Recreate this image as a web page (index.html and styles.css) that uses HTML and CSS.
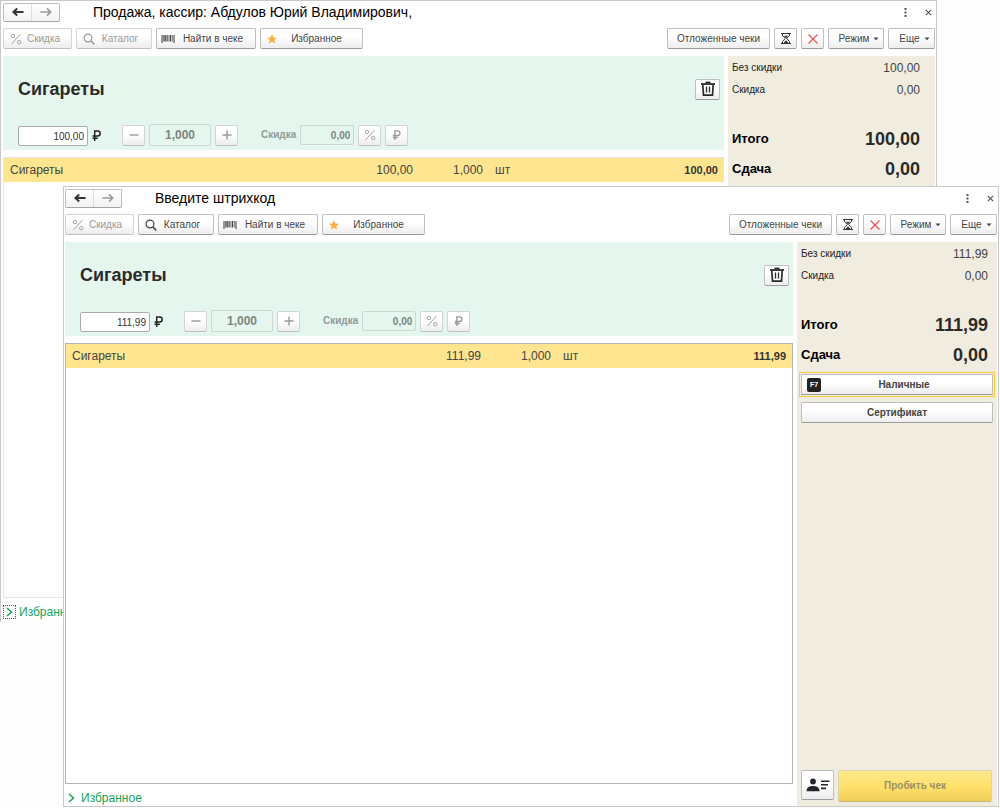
FILE: index.html
```html
<!DOCTYPE html>
<html lang="ru">
<head>
<meta charset="utf-8">
<title>Рабочее место кассира</title>
<link rel="stylesheet" href="styles.css">
</head>
<body>
<svg class="sprite" aria-hidden="true">
  <symbol id="i-back" viewBox="0 0 12 10"><path d="M11.5 5H2M5.2 1.4L1.4 5l3.800 3.600" fill="none" stroke="currentColor" stroke-width="2"/></symbol>
  <symbol id="i-fwd" viewBox="0 0 12 10"><path d="M.5 5H10M7 1.400L10.700 5 7 8.600" fill="none" stroke="currentColor" stroke-width="1.600"/></symbol>
  <symbol id="i-percent" viewBox="0 0 12 12"><g fill="none" stroke="currentColor" stroke-width=".9"><circle cx="2.900" cy="3" r="1.700"/><circle cx="9.200" cy="9.200" r="1.700"/><path d="M10.500 1L1.500 11"/></g></symbol>
  <symbol id="i-search" viewBox="0 0 12 12"><g fill="none" stroke="currentColor" stroke-width="1.200"><circle cx="5" cy="5" r="3.900"/><path d="M7.800 7.800L11.200 11.400" stroke-width="1.600"/></g></symbol>
  <symbol id="i-barcode" viewBox="0 0 14 9"><path d="M1 1V9M13 1V9" stroke="#333" stroke-width="1"/><path d="M3 1V7.500M4.800 1V7.500M9.500 1V7.500" stroke="#444" stroke-width="1.300"/><path d="M6.500 1V7.500M7.900 1V7.500M11.300 1V7.500" stroke="#666" stroke-width=".9"/></symbol>
  <symbol id="i-star" viewBox="0 0 10 10"><path d="M5 .2l1.400 3.200 3.500.300-2.600 2.300.8 3.500L5 7.700 1.900 9.500l.8-3.500L.1 3.700l3.500-.300z" fill="#fbac3c"/></symbol>
  <symbol id="i-glass" viewBox="0 0 12 13"><path d="M1 1.500H11M1 11.500H11" stroke="#333" stroke-width="1.200"/><path d="M2.500 1.500V3.500L5.300 6.500 2.500 9.500V11.500M9.500 1.500V3.500L6.700 6.500 9.500 9.500V11.500" fill="none" stroke="#333" stroke-width="1"/><path d="M3.800 3.800H8.200L6 6.200zM6 8.200L8.500 11H3.500z" fill="#333"/></symbol>
  <symbol id="i-cross" viewBox="0 0 12 12"><path d="M1.500 1.500L10.500 10.500M10.500 1.500L1.500 10.500" stroke="#ee4a4a" stroke-width="1.100"/></symbol>
  <symbol id="i-trash" viewBox="0 0 16 16"><g fill="none" stroke="#2a2a2a"><path d="M1 3H15" stroke-width="1.800"/><path d="M5.500 1.400H10.500" stroke-width="1.600"/><path d="M2.800 4L3.500 14.200H12.500L13.200 4" stroke-width="1.700"/><path d="M6.500 5.500V11.500M9.500 5.500V11.500" stroke-width="1.300"/></g></symbol>
  <symbol id="i-rub" viewBox="0 0 10 12"><path d="M3 12V1H6.300a2.600 2.600 0 0 1 0 5.600H.6M.6 9H6.500" fill="none" stroke="currentColor" stroke-width="1.600"/></symbol>
  <symbol id="i-minus" viewBox="0 0 12 12"><path d="M1.500 6H10.500" stroke="currentColor" stroke-width="1.400"/></symbol>
  <symbol id="i-plus" viewBox="0 0 12 12"><path d="M1.500 6H10.500M6 1.500V10.500" stroke="currentColor" stroke-width="1.400"/></symbol>
  <symbol id="i-caret" viewBox="0 0 6 4"><path d="M.5.500H5.500L3 3.300z" fill="#444"/></symbol>
  <symbol id="i-dots" viewBox="0 0 3 9"><path d="M.5 0h2v2h-2zM.5 3.500h2v2h-2zM.5 7h2v2h-2z" fill="#555"/></symbol>
  <symbol id="i-close" viewBox="0 0 7 7"><path d="M.8.800L6.200 6.200M6.200.800L.8 6.200" stroke="#555" stroke-width="1.100"/></symbol>
  <symbol id="i-chevron" viewBox="0 0 7 10"><path d="M1 1L5.500 5 1 9" fill="none" stroke="#16a35a" stroke-width="1.500"/></symbol>
  <symbol id="i-card" viewBox="0 0 24 14"><g fill="#262626"><circle cx="7" cy="3.500" r="2.900"/><path d="M.5 13.200C.5 9 4 8 7 8s6.500 1 6.500 5.200z"/><path d="M15 2.400h8.500v1.600H15zM15 6h7v1.600h-7zM15 9.600h5v1.600h-5z"/></g></symbol>
</svg>

<main class="desktop">
  <section class="window window-back">
    <header class="titlebar">
      <div class="nav">
        <button class="nav-btn" aria-label="Назад"><svg class="ic-arrow"><use href="#i-back"/></svg></button>
        <button class="nav-btn nav-off" aria-label="Вперед"><svg class="ic-arrow"><use href="#i-fwd"/></svg></button>
      </div>
      <h1 class="title">Продажа, кассир: Абдулов Юрий Владимирович,</h1>
      <button class="plain" aria-label="Меню"><svg class="ic-dots"><use href="#i-dots"/></svg></button>
      <button class="plain" aria-label="Закрыть"><svg class="ic-close"><use href="#i-close"/></svg></button>
    </header>
    <div class="toolbar">
      <button class="btn w-discount" disabled><svg class="ic"><use href="#i-percent"/></svg><span class="cap">Скидка</span></button>
      <button class="btn w-catalog" disabled><svg class="ic"><use href="#i-search"/></svg><span class="cap">Каталог</span></button>
      <button class="btn w-find"><svg class="ic-bar"><use href="#i-barcode"/></svg><span class="cap">Найти в чеке</span></button>
      <button class="btn w-wide"><svg class="ic-star"><use href="#i-star"/></svg><span class="cap">Избранное</span></button>
      <span class="spacer"></span>
      <button class="btn w-wide"><span class="cap">Отложенные чеки</span></button>
      <button class="btn square" aria-label="Отложить"><svg class="ic-glass"><use href="#i-glass"/></svg></button>
      <button class="btn square" aria-label="Отменить"><svg class="ic"><use href="#i-cross"/></svg></button>
      <button class="btn w-mode"><span class="cap">Режим</span><svg class="ic-caret"><use href="#i-caret"/></svg></button>
      <button class="btn w-more"><span class="cap">Еще</span><svg class="ic-caret"><use href="#i-caret"/></svg></button>
    </div>
    <div class="body">
      <div class="work">
        <div class="item">
          <div class="item-head">
            <h2 class="item-name">Сигареты</h2>
            <button class="btn trash" aria-label="Удалить"><svg class="ic-trash"><use href="#i-trash"/></svg></button>
          </div>
          <div class="item-row">
            <input class="field price" value="100,00" aria-label="Цена">
            <svg class="ic-rub"><use href="#i-rub"/></svg>
            <button class="btn square minus" disabled aria-label="Меньше"><svg class="ic"><use href="#i-minus"/></svg></button>
            <input class="field qty" value="1,000" disabled aria-label="Количество">
            <button class="btn square" disabled aria-label="Больше"><svg class="ic"><use href="#i-plus"/></svg></button>
            <label class="disc-label" for="disc-a">Скидка</label>
            <input class="field disc" id="disc-a" value="0,00" disabled>
            <button class="btn square" disabled aria-label="Процент"><svg class="ic"><use href="#i-percent"/></svg></button>
            <button class="btn square" disabled aria-label="Рубли"><svg class="ic-rub-sm"><use href="#i-rub"/></svg></button>
          </div>
        </div>
        <div class="list">
          <table class="goods">
            <tr><td>Сигареты</td><td class="c-price">100,00</td><td class="c-qty">1,000</td><td class="c-unit">шт</td><td class="c-sum">100,00</td></tr>
          </table>
        </div>
        <div class="fav"><button class="fav-toggle fav-focus" aria-label="Развернуть"><svg class="ic-chev"><use href="#i-chevron"/></svg></button><a class="fav-link" href="#">Избранное</a></div>
      </div>
      <aside class="side">
        <dl class="sums">
          <div class="sum"><dt>Без скидки</dt><dd>100,00</dd></div>
          <div class="sum"><dt>Скидка</dt><dd>0,00</dd></div>
        </dl>
        <dl class="sums totals">
          <div class="sum"><dt>Итого</dt><dd>100,00</dd></div>
          <div class="sum"><dt>Сдача</dt><dd>0,00</dd></div>
        </dl>
      </aside>
    </div>
  </section>

  <section class="window window-front">
    <header class="titlebar">
      <div class="nav">
        <button class="nav-btn" aria-label="Назад"><svg class="ic-arrow"><use href="#i-back"/></svg></button>
        <button class="nav-btn nav-off" aria-label="Вперед"><svg class="ic-arrow"><use href="#i-fwd"/></svg></button>
      </div>
      <h1 class="title">Введите штрихкод</h1>
      <button class="plain" aria-label="Меню"><svg class="ic-dots"><use href="#i-dots"/></svg></button>
      <button class="plain" aria-label="Закрыть"><svg class="ic-close"><use href="#i-close"/></svg></button>
    </header>
    <div class="toolbar">
      <button class="btn w-discount" disabled><svg class="ic"><use href="#i-percent"/></svg><span class="cap">Скидка</span></button>
      <button class="btn w-catalog"><svg class="ic"><use href="#i-search"/></svg><span class="cap">Каталог</span></button>
      <button class="btn w-find"><svg class="ic-bar"><use href="#i-barcode"/></svg><span class="cap">Найти в чеке</span></button>
      <button class="btn w-wide"><svg class="ic-star"><use href="#i-star"/></svg><span class="cap">Избранное</span></button>
      <span class="spacer"></span>
      <button class="btn w-wide"><span class="cap">Отложенные чеки</span></button>
      <button class="btn square" aria-label="Отложить"><svg class="ic-glass"><use href="#i-glass"/></svg></button>
      <button class="btn square" aria-label="Отменить"><svg class="ic"><use href="#i-cross"/></svg></button>
      <button class="btn w-mode"><span class="cap">Режим</span><svg class="ic-caret"><use href="#i-caret"/></svg></button>
      <button class="btn w-more"><span class="cap">Еще</span><svg class="ic-caret"><use href="#i-caret"/></svg></button>
    </div>
    <div class="body">
      <div class="work">
        <div class="item">
          <div class="item-head">
            <h2 class="item-name">Сигареты</h2>
            <button class="btn trash" aria-label="Удалить"><svg class="ic-trash"><use href="#i-trash"/></svg></button>
          </div>
          <div class="item-row">
            <input class="field price" value="111,99" aria-label="Цена">
            <svg class="ic-rub"><use href="#i-rub"/></svg>
            <button class="btn square minus" disabled aria-label="Меньше"><svg class="ic"><use href="#i-minus"/></svg></button>
            <input class="field qty" value="1,000" disabled aria-label="Количество">
            <button class="btn square" disabled aria-label="Больше"><svg class="ic"><use href="#i-plus"/></svg></button>
            <label class="disc-label" for="disc-b">Скидка</label>
            <input class="field disc" id="disc-b" value="0,00" disabled>
            <button class="btn square" disabled aria-label="Процент"><svg class="ic"><use href="#i-percent"/></svg></button>
            <button class="btn square" disabled aria-label="Рубли"><svg class="ic-rub-sm"><use href="#i-rub"/></svg></button>
          </div>
        </div>
        <div class="list">
          <table class="goods">
            <tr><td>Сигареты</td><td class="c-price">111,99</td><td class="c-qty">1,000</td><td class="c-unit">шт</td><td class="c-sum">111,99</td></tr>
          </table>
        </div>
        <div class="fav"><button class="fav-toggle" aria-label="Развернуть"><svg class="ic-chev"><use href="#i-chevron"/></svg></button><a class="fav-link" href="#">Избранное</a></div>
      </div>
      <aside class="side">
        <dl class="sums">
          <div class="sum"><dt>Без скидки</dt><dd>111,99</dd></div>
          <div class="sum"><dt>Скидка</dt><dd>0,00</dd></div>
        </dl>
        <dl class="sums totals">
          <div class="sum"><dt>Итого</dt><dd>111,99</dd></div>
          <div class="sum"><dt>Сдача</dt><dd>0,00</dd></div>
        </dl>
        <div class="pay">
          <button class="btn pay-btn pay-focus"><span class="key">F7</span><span class="cap">Наличные</span></button>
          <button class="btn pay-btn"><span class="cap">Сертификат</span></button>
        </div>
        <div class="finish">
          <button class="btn client" aria-label="Клиент"><svg class="ic-card"><use href="#i-card"/></svg></button>
          <button class="btn punch" disabled>Пробить чек</button>
        </div>
      </aside>
    </div>
  </section>
</main>
</body>
</html>
```

FILE: styles.css
```css
* { box-sizing: border-box; }

body {
  margin: 0;
  background: #fdfdfd;
  color: #333;
  font: 10px/14px "Liberation Sans", Arial, sans-serif;
}

h1, h2, dl, dt, dd { margin: 0; }
button, input { font: inherit; color: inherit; }
svg { display: block; flex: none; }
.sprite { position: absolute; width: 0; height: 0; }

/* Desktop with two overlapping windows */
.desktop { position: relative; height: 100vh; min-height: 600px; overflow: hidden; }

.window {
  position: absolute;
  display: flex;
  flex-direction: column;
  background: #fff;
  border: 1px solid #c9c9c9;
}
.window-back {
  --side: 207px; --sum-pad: 15px; --list-line: #e6e6e6;
  inset: 0 63px 186px 0;
  padding: 1px 1px 0 2px;
  border-bottom: 0;
}
.window-front {
  --side: 200px; --sum-pad: 9px; --list-line: #b4b4b4;
  inset: 186px 1px 1px 63px;
  padding: 1px 1px 0 1px;
}

/* Title bar */
.titlebar { display: flex; align-items: center; height: 20px; padding-right: 3px; }
.nav { display: flex; width: 57px; height: 19px; border: 1px solid #bdbdbd; border-bottom-color: #a4a4a4; border-radius: 2px; }
.nav-btn {
  flex: 1; display: flex; align-items: center; justify-content: center;
  padding: 0; border: 0; color: #333;
  background: linear-gradient(#fff, #f2f2f2);
}
.nav-off { color: #999; border-left: 1px solid #ddd; }
.title { flex: 1; margin-left: 33px; font-size: 14px; line-height: 20px; font-weight: 400; color: #000; }
.plain { display: flex; padding: 0; margin-left: 18px; border: 0; background: none; }

/* Buttons */
.btn {
  display: flex; align-items: center; justify-content: center;
  height: 21px; padding: 0;
  color: #444;
  background: linear-gradient(#fff 40%, #ededed);
  border: 1px solid #bfbfbf; border-bottom-color: #9c9c9c; border-radius: 2px;
}
.btn:disabled { color: #999; border-color: #d4d4d4; border-bottom-color: #c0c0c0; }
.cap { flex: 1; text-align: center; white-space: nowrap; }
.square { width: 23px; flex: none; }

.toolbar { display: flex; gap: 4px; margin-top: 6px; }
.toolbar .btn { flex: none; }
.w-discount { width: 69px; padding: 0 6px; }
.w-catalog { width: 76px; padding: 0 6px; }
.w-find { width: 100px; padding: 0 4px; }
.w-wide { width: 103px; padding: 0 6px; }
.w-mode { width: 56px; padding: 0 4px 0 6px; }
.w-more { width: 47px; padding: 0 4px 0 6px; }
.spacer { flex: 1; }

/* Body */
.body { flex: 1; display: grid; grid-template-columns: 1fr var(--side); column-gap: 4px; margin-top: 7px; min-height: 0; }
.work { display: flex; flex-direction: column; min-width: 0; }
.item { padding: 22px 4px 4px 15px; background: #e5f6ee; }
.item-head { display: flex; align-items: center; justify-content: space-between; height: 22px; }
.item-name { font-size: 18px; line-height: 22px; font-weight: 700; color: #2a2a2a; }
.trash { width: 25px; }
.item-row { display: flex; align-items: center; gap: 4px; height: 22px; margin-top: 24px; }

.field { height: 22px; padding: 0 3px; border: 1px solid #ababab; border-radius: 2px; background: #fff; text-align: right; min-width: 0; }
.field:disabled { background: transparent; border-color: #ccd8d2; color: #7d8581; font-weight: 700; }
.price { width: 70px; height: 20px; align-self: flex-end; }
.qty { width: 62px; text-align: center; font-size: 12px; }
.disc { width: 54px; height: 20px; }
.minus { margin-left: 17px; }
.disc-label { margin-left: 19px; color: #929a96; font-weight: 700; }

.list { flex: 1; margin-top: 7px; border: 1px solid var(--list-line); background: #fff; }
.window-back .list { border-right: 0; }
.goods { width: 100%; border-collapse: collapse; table-layout: fixed; background: #ffe58f; color: #444; font-size: 12px; line-height: 24px; }
.goods td { padding: 0 0 0 6px; }
.goods .c-price { width: 100px; padding: 0; text-align: right; }
.goods .c-qty { width: 70px; padding: 0; text-align: right; }
.goods .c-unit { width: 91px; padding-left: 12px; }
.goods .c-sum { width: 150px; padding: 0 6px 0 0; text-align: right; font-size: 11px; font-weight: 700; color: #333; }

.fav { display: flex; align-items: center; gap: 3px; height: 22px; padding-top: 6px; }
.window-back .fav { height: 24px; padding-top: 4px; }
.fav-toggle { display: flex; align-items: center; justify-content: center; width: 13px; height: 14px; padding: 0; border: 0; background: none; }
.fav-focus { border: 1px dotted #555; }
.fav-link { color: #16a35a; font-size: 12px; line-height: 14px; text-decoration: none; }

/* Side panel */
.side { display: flex; flex-direction: column; padding: 1px 4px 4px; background: #f1ece0; }
.sum { display: flex; align-items: center; justify-content: space-between; height: 22px; padding-right: calc(var(--sum-pad) - 4px); color: #222; }
.sum dd { font-size: 12px; color: #444; }
.totals { margin-top: 23px; }
.totals .sum { height: 30px; color: #000; font-weight: 700; }
.totals dt { font-size: 13px; }
.totals dd { font-size: 18px; color: #2a2a2a; }

.pay { display: flex; flex-direction: column; gap: 7px; margin-top: 4px; }
.pay-btn { width: 100%; padding: 0 5px; font-weight: 700; }
.pay-focus { border-radius: 0; outline: 1px solid #fbcb3a; outline-offset: 1px; }
.key { width: 14px; border-radius: 2px; background: #222; color: #fff; font-size: 7px; line-height: 14px; text-align: center; }

.finish { display: flex; align-items: flex-start; gap: 4px; margin-top: auto; padding-right: 1px; }
.client { width: 33px; height: 30px; }
.punch { flex: 1; height: 32px; font-weight: 700; background: linear-gradient(#ffe88a, #ffe06a 55%, #efcd58); }
.punch:disabled { color: #9a8f62; border-color: #dcd3b4; border-bottom-color: #c4b679; }

/* Icon sizes */
.ic { width: 12px; height: 12px; }
.ic-arrow { width: 12px; height: 10px; }
.ic-bar { width: 14px; height: 9px; }
.ic-star { width: 10px; height: 10px; }
.ic-glass { width: 12px; height: 13px; }
.ic-trash { width: 16px; height: 16px; }
.ic-rub { width: 9px; height: 11px; color: #222; }
.ic-rub-sm { width: 9px; height: 10px; }
.ic-caret { width: 6px; height: 4px; }
.ic-dots { width: 3px; height: 9px; }
.ic-close { width: 7px; height: 7px; }
.ic-chev { width: 7px; height: 10px; }
.ic-card { width: 24px; height: 14px; }
```
